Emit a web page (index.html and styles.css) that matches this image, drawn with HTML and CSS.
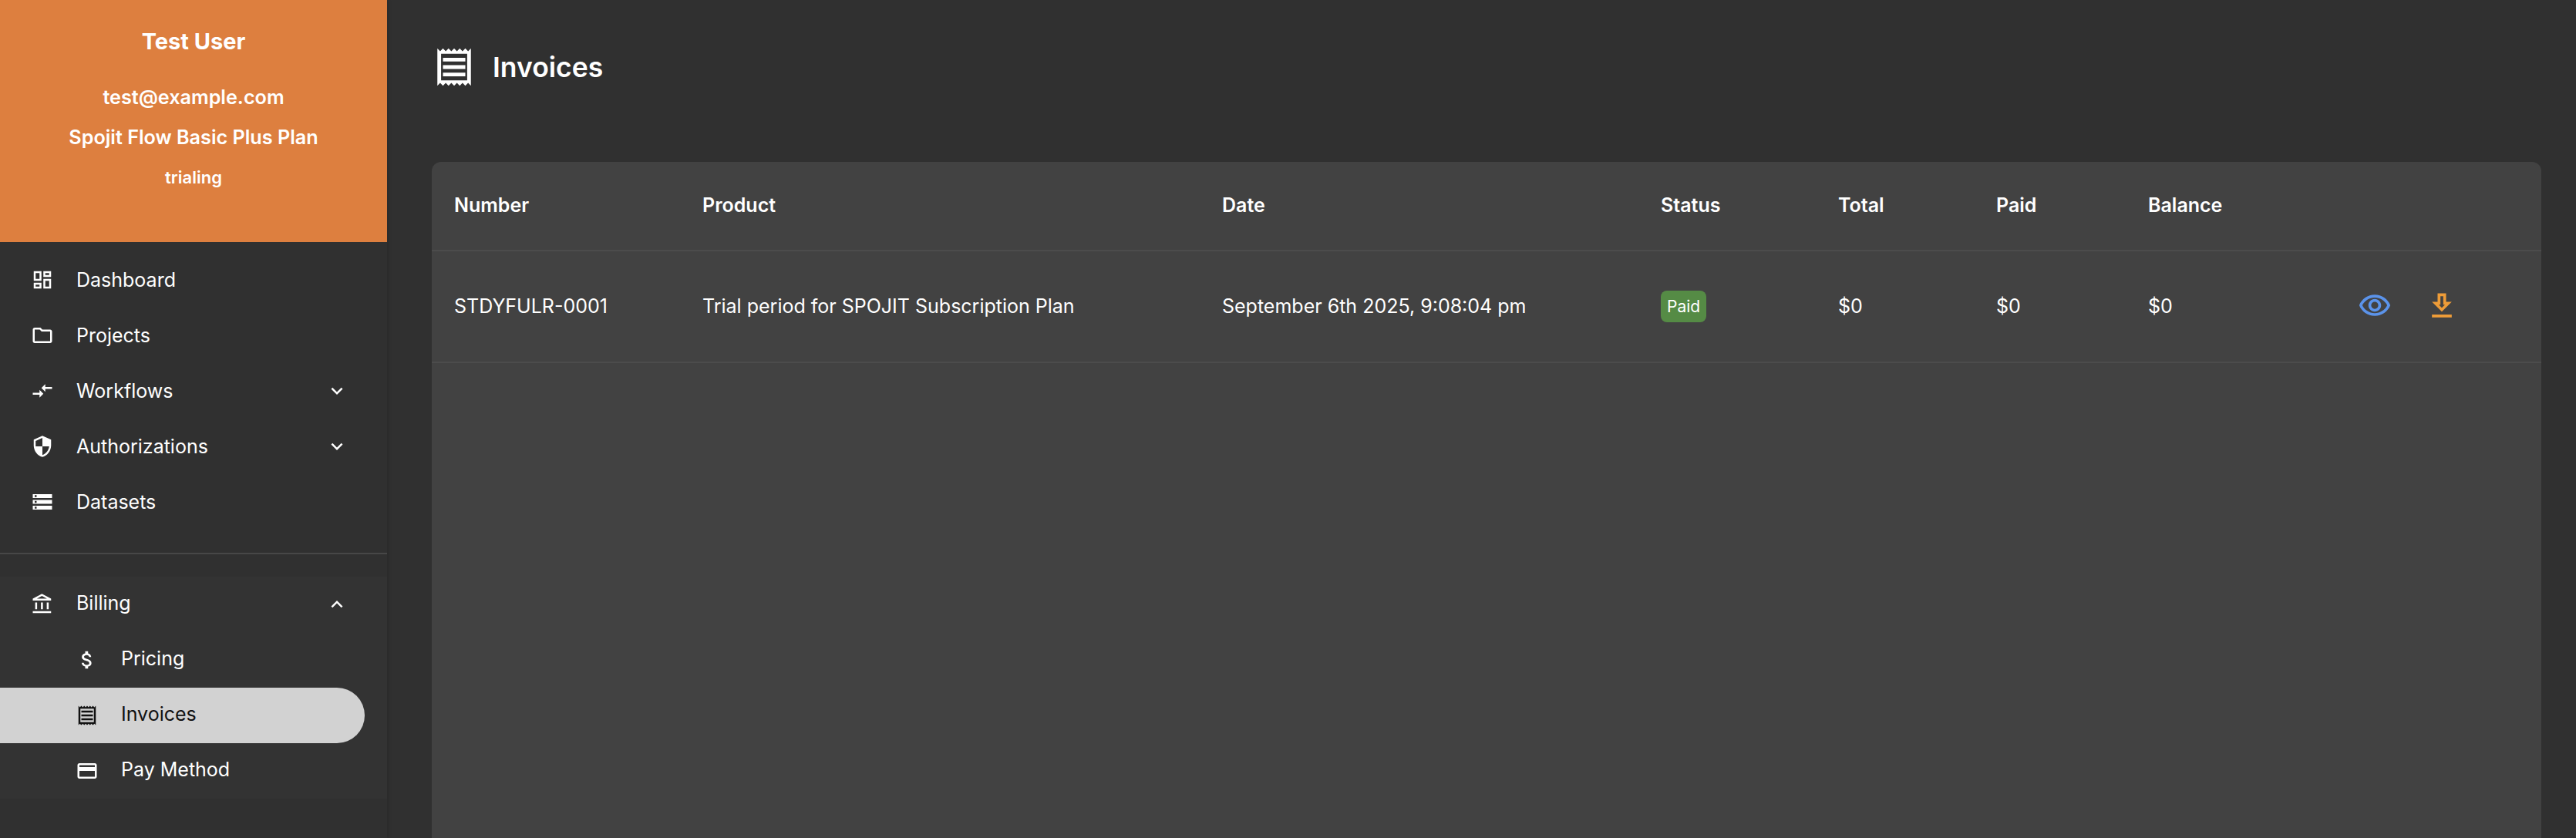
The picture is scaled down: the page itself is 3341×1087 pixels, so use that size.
FILE: index.html
```html
<!doctype html>
<html lang="en">
<head>
	<meta charset="UTF-8">
	<title>Invoices</title>
	<link rel="stylesheet" href="styles.css">
</head>
<body>
	<div class="sidebar">
		<div class="profile">
			<div class="profile-name">Test User</div>
			<div class="profile-line">test@example.com</div>
			<div class="profile-line">Spojit Flow Basic Plus Plan</div>
			<div class="profile-status">trialing</div>
		</div>
		<ul class="nav">
			<li class="nav-item">
				<svg class="nav-icon" viewBox="0 0 24 24"><path d="M19 5v2h-4V5h4M9 5v6H5V5h4m10 8v6h-4v-6h4M9 17v2H5v-2h4M21 3h-8v6h8V3zM11 3H3v10h8V3zm10 8h-8v10h8V11zm-10 4H3v6h8v-6z"/></svg>
				<span>Dashboard</span>
			</li>
			<li class="nav-item">
				<svg class="nav-icon" viewBox="0 0 24 24"><path d="M9.17 6l2 2H20v10H4V6h5.17M10 4H4c-1.1 0-1.99.9-1.99 2L2 18c0 1.1.9 2 2 2h16c1.1 0 2-.9 2-2V8c0-1.1-.9-2-2-2h-8l-2-2z"/></svg>
				<span>Projects</span>
			</li>
			<li class="nav-item">
				<svg class="nav-icon" viewBox="0 0 24 24"><path d="M9.01 14H2v2h7.01v3L13 15l-3.99-4v3zm5.98-1v-3H22V8h-7.01V5L11 9l3.99 4z"/></svg>
				<span>Workflows</span>
				<svg class="nav-arrow" viewBox="0 0 24 24"><path d="M16.59 8.59 12 13.17 7.41 8.59 6 10l6 6 6-6z"/></svg>
			</li>
			<li class="nav-item">
				<svg class="nav-icon" viewBox="0 0 24 24"><path d="M12 1L3 5v6c0 5.55 3.84 10.74 9 12 5.16-1.26 9-6.45 9-12V5l-9-4zm0 10.99h7c-.53 4.12-3.28 7.79-7 8.94V12H5V6.3l7-3.11v8.8z"/></svg>
				<span>Authorizations</span>
				<svg class="nav-arrow" viewBox="0 0 24 24"><path d="M16.59 8.59 12 13.17 7.41 8.59 6 10l6 6 6-6z"/></svg>
			</li>
			<li class="nav-item">
				<svg class="nav-icon" viewBox="0 0 24 24"><path d="M2 20h20v-4H2v4zm2-3h2v2H4v-2zM2 4v4h20V4H2zm4 3H4V5h2v2zm-4 7h20v-4H2v4zm2-3h2v2H4v-2z"/></svg>
				<span>Datasets</span>
			</li>
		</ul>
		<div class="nav-divider"></div>
		<ul class="nav nav-open">
			<li class="nav-item">
				<svg class="nav-icon" viewBox="0 0 24 24"><path d="M6.5 10h-2v7h2v-7zm6 0h-2v7h2v-7zm8.5 9H2v2h19v-2zm-2.5-9h-2v7h2v-7zm-7-6.74L16.71 6H6.29l5.21-2.74m0-2.26L2 6v2h19V6l-9.5-5z"/></svg>
				<span>Billing</span>
				<svg class="nav-arrow" viewBox="0 0 24 24"><path d="m12 8-6 6 1.41 1.41L12 10.83l4.59 4.58L18 14z"/></svg>
			</li>
			<li class="nav-item nav-sub">
				<svg class="nav-icon" viewBox="0 0 24 24"><path d="M11.8 10.9c-2.27-.59-3-1.2-3-2.15 0-1.09 1.01-1.85 2.7-1.85 1.78 0 2.44.85 2.5 2.1h2.21c-.07-1.72-1.12-3.3-3.21-3.81V3h-3v2.16c-1.94.42-3.5 1.68-3.5 3.61 0 2.31 1.91 3.46 4.7 4.13 2.5.6 3 1.48 3 2.41 0 .69-.49 1.79-2.7 1.79-2.06 0-2.87-.92-2.98-2.1h-2.2c.12 2.19 1.76 3.42 3.68 3.83V21h3v-2.15c1.95-.37 3.5-1.5 3.5-3.55 0-2.84-2.43-3.81-4.7-4.4z"/></svg>
				<span>Pricing</span>
			</li>
			<li class="nav-item nav-sub active">
				<svg class="nav-icon" viewBox="0 0 24 24"><path d="M19.5 3.5 18 2l-1.5 1.5L15 2l-1.5 1.5L12 2l-1.5 1.5L9 2 7.5 3.5 6 2 4.5 3.5 3 2v20l1.5-1.5L6 22l1.5-1.5L9 22l1.5-1.5L12 22l1.5-1.5L15 22l1.5-1.5L18 22l1.5-1.5L21 22V2l-1.5 1.5zM19 19.09H5V4.91h14v14.18zM6 15h12v2H6zm0-4h12v2H6zm0-4h12v2H6z"/></svg>
				<span>Invoices</span>
			</li>
			<li class="nav-item nav-sub">
				<svg class="nav-icon" viewBox="0 0 24 24"><path d="M20 4H4c-1.11 0-1.99.89-1.99 2L2 18c0 1.11.89 2 2 2h16c1.11 0 2-.89 2-2V6c0-1.11-.89-2-2-2zm0 14H4v-6h16v6zm0-10H4V6h16v2z"/></svg>
				<span>Pay Method</span>
			</li>
		</ul>
	</div>
	<div class="main">
		<div class="page-title">
			<svg class="page-icon" viewBox="0 0 24 24"><path d="M19.5 3.5 18 2l-1.5 1.5L15 2l-1.5 1.5L12 2l-1.5 1.5L9 2 7.5 3.5 6 2 4.5 3.5 3 2v20l1.5-1.5L6 22l1.5-1.5L9 22l1.5-1.5L12 22l1.5-1.5L15 22l1.5-1.5L18 22l1.5-1.5L21 22V2l-1.5 1.5zM19 19.09H5V4.91h14v14.18zM6 15h12v2H6zm0-4h12v2H6zm0-4h12v2H6z"/></svg>
			<h1>Invoices</h1>
		</div>
		<div class="card">
			<table class="invoices">
				<thead>
					<tr>
						<th class="col-number">Number</th>
						<th class="col-product">Product</th>
						<th class="col-date">Date</th>
						<th class="col-status">Status</th>
						<th class="col-total">Total</th>
						<th class="col-paid">Paid</th>
						<th class="col-balance">Balance</th>
						<th></th>
					</tr>
				</thead>
				<tbody>
					<tr>
						<td>STDYFULR-0001</td>
						<td>Trial period for SPOJIT Subscription Plan</td>
						<td>September 6th 2025, 9:08:04 pm</td>
						<td class="cell-status"><span class="badge">Paid</span></td>
						<td>$0</td>
						<td>$0</td>
						<td>$0</td>
						<td>
							<div class="actions">
								<svg class="action-view" viewBox="0 0 24 24"><path d="M12 6c3.79 0 7.17 2.13 8.82 5.5C19.17 14.87 15.79 17 12 17s-7.17-2.13-8.82-5.5C4.83 8.13 8.21 6 12 6m0-2C7 4 2.73 7.11 1 11.5 2.73 15.89 7 19 12 19s9.27-3.11 11-7.5C21.27 7.11 17 4 12 4zm0 5c1.38 0 2.5 1.12 2.5 2.5S13.38 14 12 14s-2.5-1.12-2.5-2.5S10.62 9 12 9m0-2c-2.48 0-4.5 2.02-4.5 4.5S9.52 16 12 16s4.5-2.02 4.5-4.5S14.48 7 12 7z"/></svg>
								<svg class="action-download" viewBox="0 0 24 24"><path d="M19 9h-4V3H9v6H5l7 7 7-7zM11 5h2v6h1.17L12 13.17 9.83 11H11V5zm-6 13h14v2H5z"/></svg>
							</div>
						</td>
					</tr>
				</tbody>
			</table>
		</div>
	</div>
</body>
</html>
```

FILE: styles.css
```css
*{
	box-sizing: border-box;
}
html,body{
	height: 100%;
}
body{
	margin: 0;
	display: flex;
	overflow: hidden;
	background: #303030;
	color: #fff;
	font-family: Inter, "Liberation Sans", sans-serif;
	font-size: 25px;
}
ul{
	margin: 0;
	padding: 0;
	list-style: none;
}
svg{
	fill: currentColor;
	flex: none;
}

/* sidebar */
.sidebar{
	width: 502px;
	flex: none;
	background: #303030;
	box-shadow: 2px 0 4px rgba(0,0,0,.12);
}
.profile{
	height: 314px;
	padding-top: 36px;
	background: #dd7f3f;
	text-align: center;
}
.profile-name{
	font-size: 29px;
	font-weight: 700;
	line-height: 36px;
	margin-bottom: 36px;
}
.profile-line{
	font-size: 25.2px;
	font-weight: 600;
	line-height: 36px;
	margin-bottom: 16px;
}
.profile-status{
	font-size: 22px;
	font-weight: 600;
	line-height: 30px;
	margin-top: 19px;
}
.nav{
	padding-top: 13px;
}
.nav-item{
	height: 72px;
	padding-left: 40px;
	padding-right: 50px;
	display: flex;
	align-items: center;
}
.nav-item span{
	margin-bottom: 1px;
}
.nav-icon{
	width: 30px;
	height: 30px;
	margin-right: 29px;
}
.nav-arrow{
	width: 30px;
	height: 30px;
	margin-left: auto;
}
.nav-divider{
	height: 2px;
	margin-top: 30px;
	background: #474747;
}
.nav-open{
	padding-top: 0;
	margin-top: 29px;
	background: #333;
}
.nav-open .nav-item span{
	margin-bottom: 4px;
}
.nav-sub{
	padding-left: 98px;
	margin-right: 29px;
}
.active{
	background: #d2d2d2;
	color: #111;
	border-radius: 0 36px 36px 0;
}

/* main */
.main{
	flex: 1;
	min-width: 0;
	padding: 0 45px 0 58px;
	display: flex;
	flex-direction: column;
}
.page-title{
	height: 210px;
	padding-bottom: 36px;
	display: flex;
	align-items: center;
}
.page-icon{
	width: 58px;
	height: 58px;
	margin-right: 21px;
}
.page-title h1{
	margin: 0;
	font-size: 35.5px;
	font-weight: 600;
}
.card{
	flex: 1;
	background: #424242;
	border-radius: 12px 12px 0 0;
}
.invoices{
	width: 100%;
	table-layout: fixed;
	border-collapse: collapse;
}
.invoices th,.invoices td{
	padding: 0 0 0 29px;
	text-align: left;
	font-size: 25px;
	border-bottom: 2px solid #4c4c4c;
}
.invoices th{
	height: 115px;
	padding-bottom: 2px;
	font-weight: 600;
}
.invoices td{
	height: 145px;
	padding-bottom: 2px;
	font-weight: 400;
}
.invoices .cell-status{
	padding-bottom: 0;
}
.col-number{
	width: 322px;
}
.col-product{
	width: 674px;
}
.col-date{
	width: 569px;
}
.col-status{
	width: 230px;
}
.col-total{
	width: 205px;
}
.col-paid{
	width: 197px;
}
.col-balance{
	width: 197px;
}
.badge{
	display: inline-block;
	height: 41px;
	padding: 0 8px;
	line-height: 41px;
	font-size: 21px;
	background: #558b45;
	border-radius: 8px;
}
.actions{
	display: flex;
	gap: 43px;
	padding-left: 75px;
}
.actions svg{
	width: 44px;
	height: 44px;
}
.action-view{
	color: #5b93ea;
}
.action-download{
	color: #ee9c38;
}
```
